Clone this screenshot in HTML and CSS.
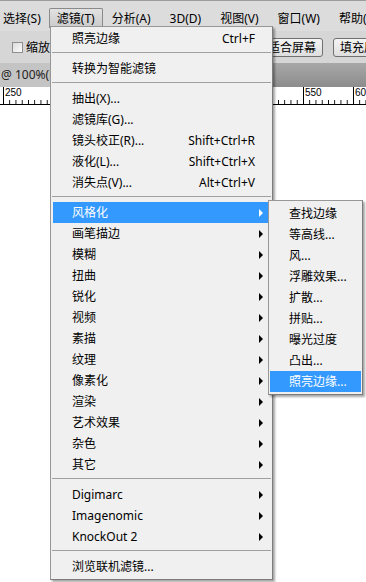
FILE: index.html
```html
<!DOCTYPE html>
<html lang="zh-CN">
<head>
  <meta charset="UTF-8">
  <title>滤镜菜单</title>
  <link rel="stylesheet" href="styles.css">
</head>
<body>
  <div class="app">
    <div class="menubar">
      <span class="top-item">选择(S)</span>
      <span class="top-item open">滤镜(T)</span>
      <span class="top-item">分析(A)</span>
      <span class="top-item">3D(D)</span>
      <span class="top-item">视图(V)</span>
      <span class="top-item">窗口(W)</span>
      <span class="top-item">帮助(H)</span>
    </div>
    <div class="options">
      <label class="check"><span class="check-box"></span>缩放所有窗口</label>
      <span class="btn">适合屏幕</span>
      <span class="btn">填充屏幕</span>
    </div>
    <div class="tabs">
      <div class="tab">@ 100%(RGB/8)</div>
    </div>
    <div class="ruler">
      <span>250</span><span>300</span><span>350</span><span>400</span>
      <span>450</span><span>500</span><span>550</span><span>600</span>
    </div>
    <div class="canvas"></div>

    <div class="menu main-menu">
      <div class="item"><span>照亮边缘</span><span class="key">Ctrl+F</span></div>
      <div class="sep"></div>
      <div class="item"><span>转换为智能滤镜</span></div>
      <div class="sep"></div>
      <div class="item"><span>抽出(X)...</span></div>
      <div class="item"><span>滤镜库(G)...</span></div>
      <div class="item"><span>镜头校正(R)...</span><span class="key">Shift+Ctrl+R</span></div>
      <div class="item"><span>液化(L)...</span><span class="key">Shift+Ctrl+X</span></div>
      <div class="item"><span>消失点(V)...</span><span class="key">Alt+Ctrl+V</span></div>
      <div class="sep"></div>
      <div class="item sub hot"><span>风格化</span><i class="arrow"></i></div>
      <div class="item sub"><span>画笔描边</span><i class="arrow"></i></div>
      <div class="item sub"><span>模糊</span><i class="arrow"></i></div>
      <div class="item sub"><span>扭曲</span><i class="arrow"></i></div>
      <div class="item sub"><span>锐化</span><i class="arrow"></i></div>
      <div class="item sub"><span>视频</span><i class="arrow"></i></div>
      <div class="item sub"><span>素描</span><i class="arrow"></i></div>
      <div class="item sub"><span>纹理</span><i class="arrow"></i></div>
      <div class="item sub"><span>像素化</span><i class="arrow"></i></div>
      <div class="item sub"><span>渲染</span><i class="arrow"></i></div>
      <div class="item sub"><span>艺术效果</span><i class="arrow"></i></div>
      <div class="item sub"><span>杂色</span><i class="arrow"></i></div>
      <div class="item sub"><span>其它</span><i class="arrow"></i></div>
      <div class="sep"></div>
      <div class="item sub"><span>Digimarc</span><i class="arrow"></i></div>
      <div class="item sub"><span>Imagenomic</span><i class="arrow"></i></div>
      <div class="item sub"><span>KnockOut 2</span><i class="arrow"></i></div>
      <div class="sep"></div>
      <div class="item"><span>浏览联机滤镜...</span></div>
    </div>

    <div class="menu sub-menu">
      <div class="item"><span>查找边缘</span></div>
      <div class="item"><span>等高线...</span></div>
      <div class="item"><span>风...</span></div>
      <div class="item"><span>浮雕效果...</span></div>
      <div class="item"><span>扩散...</span></div>
      <div class="item"><span>拼贴...</span></div>
      <div class="item"><span>曝光过度</span></div>
      <div class="item"><span>凸出...</span></div>
      <div class="item hot"><span>照亮边缘...</span></div>
    </div>
  </div>
</body>
</html>
```

FILE: styles.css
```css
body {
  margin: 0;
  background: #fff;
  font-family: "Noto Sans", "Noto Sans CJK SC", sans-serif;
  font-size: 12px;
  color: #000;
}
.app {
  position: relative;
  width: 366px;
  height: 582px;
  overflow: hidden;
}
.menubar {
  height: 30px;
  border-top: 1px solid #9c9c9c;
  background: #dcdcdc;
  display: flex;
  align-items: flex-start;
  margin-left: -5px;
  white-space: nowrap;
}
.top-item {
  margin-top: 7px;
  height: 19px;
  line-height: 19px;
  padding: 0 7px;
  border: 1px solid transparent;
  border-bottom: 0;
}
.top-item.open {
  border-color: #8a8a8a;
  border-radius: 2px 2px 0 0;
  background: linear-gradient(#e2e2e2, #cacaca);
}
.top-item.open ~ .top-item {
  padding: 0 9px 0 8px;
}
.options {
  height: 32px;
  background: #d6d6d6;
  display: flex;
  align-items: center;
  padding-left: 12px;
  white-space: nowrap;
}
.check {
  width: 249px;
  display: flex;
  align-items: center;
  flex-shrink: 0;
}
.check-box {
  width: 9px;
  height: 9px;
  border: 1px solid #8e8f8f;
  background: linear-gradient(135deg, #dcdcdc, #fbfbfb);
  margin-right: 3px;
}
.btn {
  flex-shrink: 0;
  height: 17px;
  line-height: 17px;
  padding: 0 6px;
  border: 1px solid #707070;
  border-radius: 3px;
  background: linear-gradient(#f4f4f4, #dedede);
  margin-right: 10px;
}
.tabs {
  height: 24px;
  background: linear-gradient(#a8a8a8, #8c8c8c);
  display: flex;
}
.tab {
  width: 210px;
  background: #c4c4c4;
  line-height: 24px;
  padding-left: 1px;
  color: #222;
  white-space: nowrap;
}
.ruler {
  height: 17px;
  border-bottom: 1px solid #000;
  background-color: #fff;
  background-image:
    linear-gradient(to right, #000 1px, transparent 1px),
    linear-gradient(to right, #000 1px, transparent 1px);
  background-size: 50px 100%, 6.25px 4px;
  background-position: 3px 0, 3px 100%;
  background-repeat: repeat-x;
  display: flex;
  padding-left: 5px;
  font-family: "Liberation Sans", sans-serif;
  font-size: 10px;
  line-height: 10px;
}
.ruler span {
  width: 50px;
  flex-shrink: 0;
  padding-top: 1px;
}
.canvas {
  height: 400px;
  background: #fff;
}
.menu {
  position: absolute;
  background: #f0f0f0;
  border: 1px solid #979797;
  border-right-color: #7c7c7c;
  border-bottom-color: #7c7c7c;
  box-shadow: 2px 2px 2px rgba(0, 0, 0, 0.35);
  white-space: nowrap;
}
.main-menu {
  left: 50px;
  top: 26px;
  width: 217px;
  padding: 1px 2px 2px;
}
.sub-menu {
  left: 268px;
  top: 200px;
  width: 91px;
  padding: 2px 1px;
}
.item {
  box-sizing: border-box;
  height: 21px;
  line-height: 20px;
  padding: 1px 7px 0 19px;
  display: flex;
  align-items: center;
}
.item.hot {
  background: #3399ff;
  color: #fff;
}
.key {
  margin-left: auto;
  margin-right: 8px;
}
.arrow {
  margin-left: auto;
  width: 0;
  height: 0;
  border-left: 4px solid #000;
  border-top: 4px solid transparent;
  border-bottom: 4px solid transparent;
}
.hot .arrow {
  border-left-color: #fff;
}
.sep {
  height: 1px;
  background: #a0a0a0;
  margin: 3px -1px 5px;
}
```
